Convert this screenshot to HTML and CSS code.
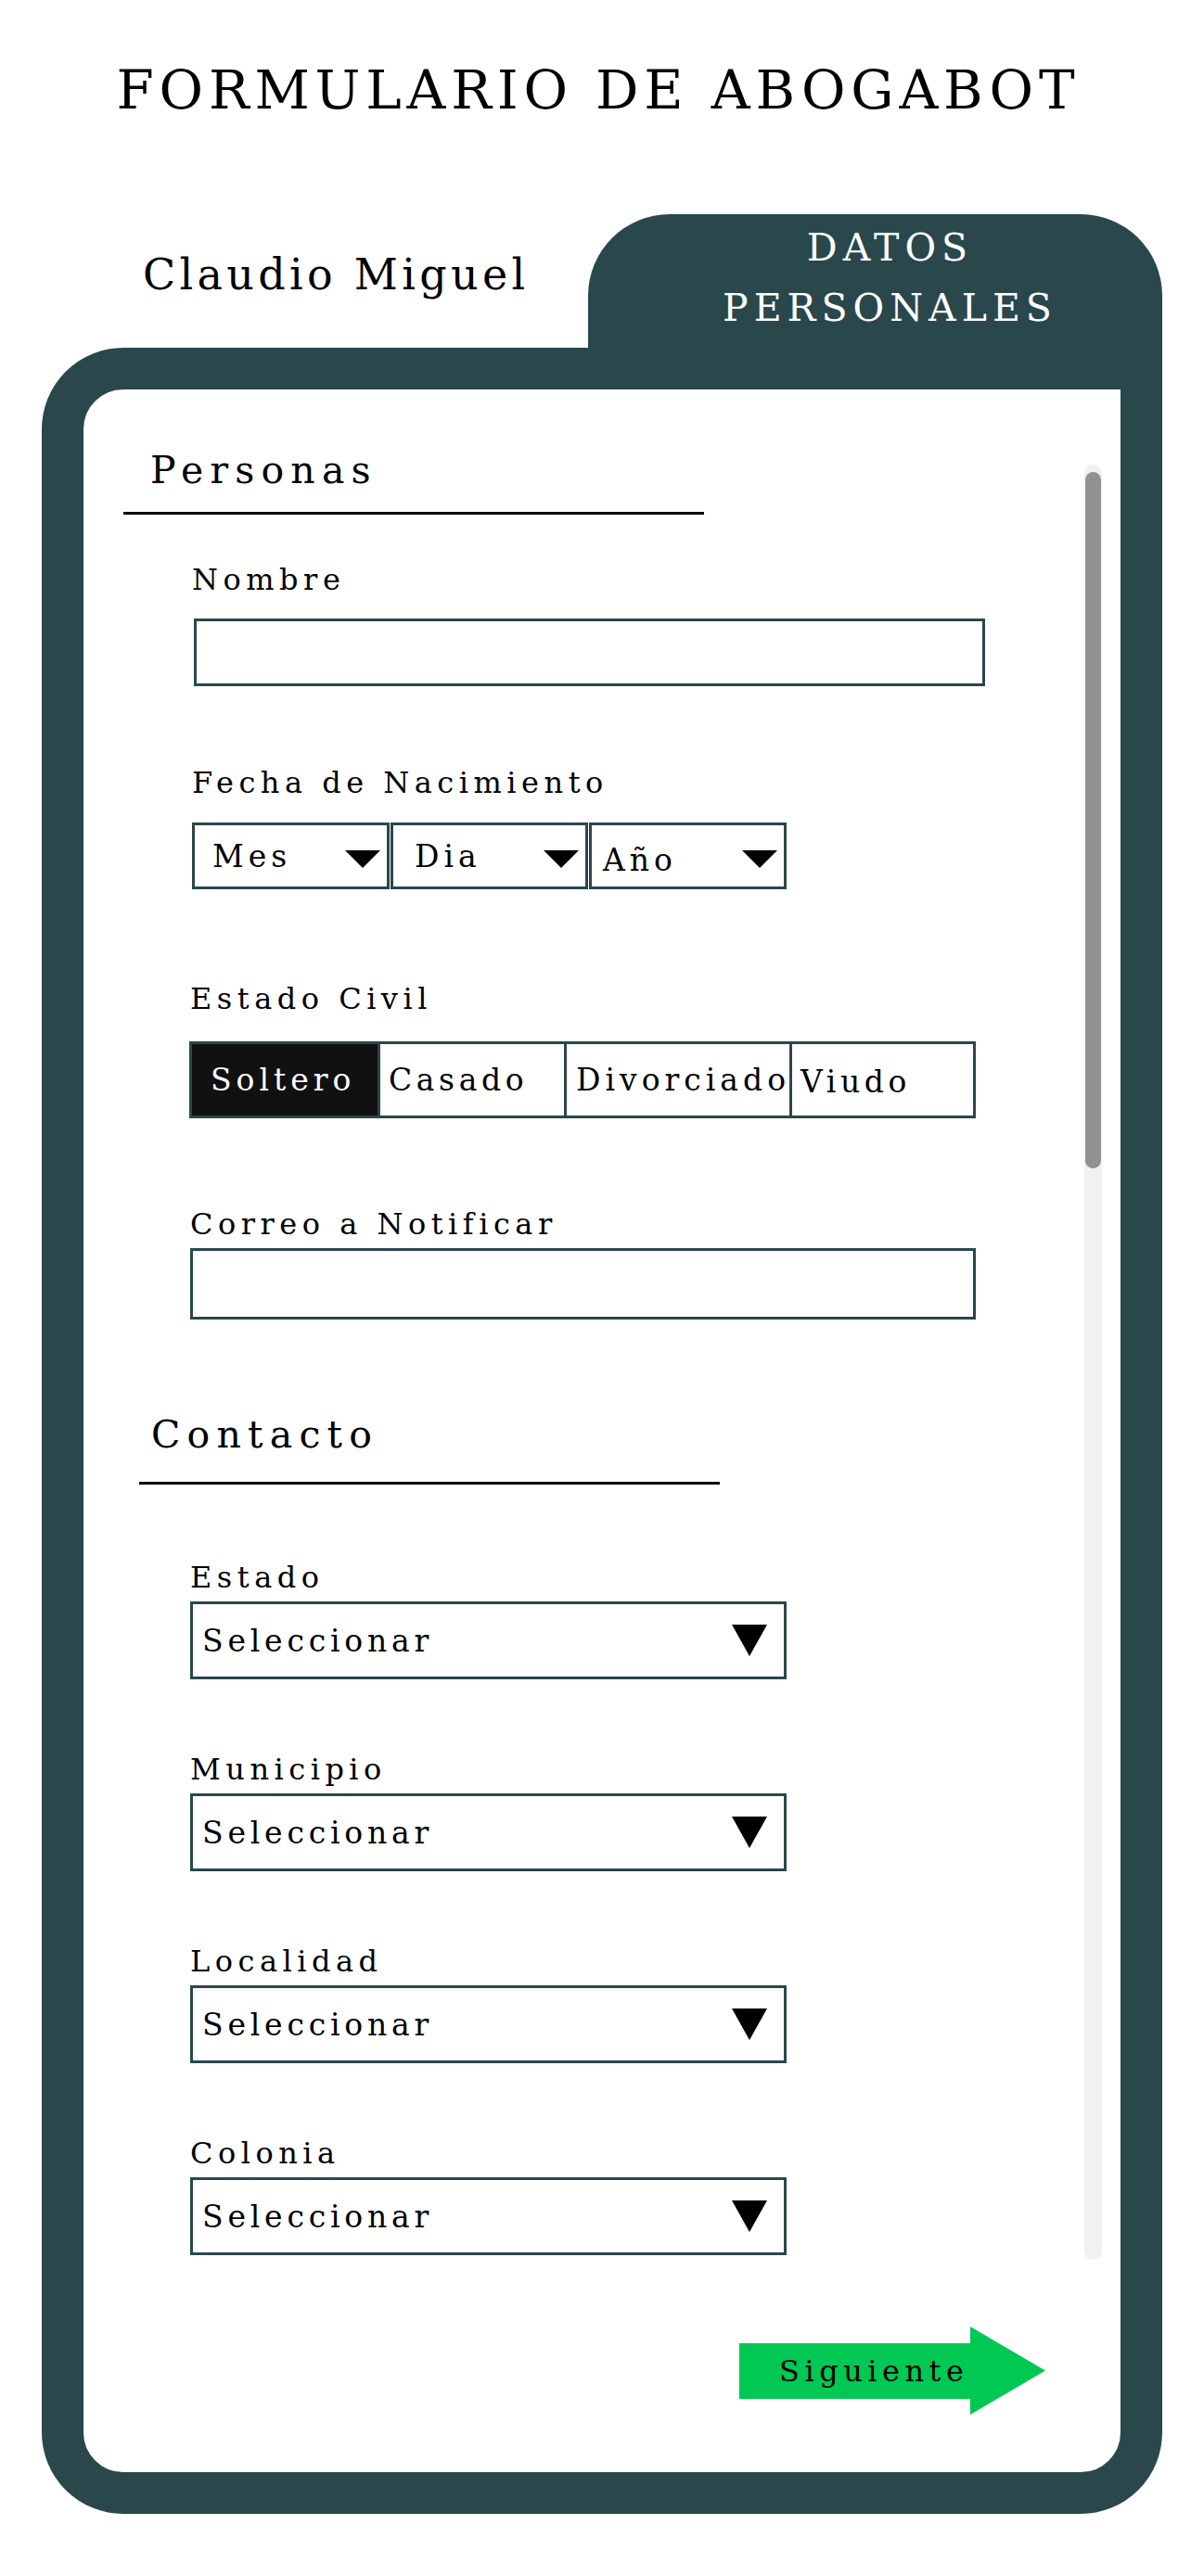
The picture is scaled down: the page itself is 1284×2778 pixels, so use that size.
FILE: index.html
```html
<!DOCTYPE html>
<html lang="es">
<head>
<meta charset="utf-8">
<title>Formulario de Abogabot</title>
<link rel="stylesheet" href="styles.css">
</head>
<body>
<h1 class="title">FORMULARIO DE ABOGABOT</h1>
<div class="sheet">
  <div class="sheet-head">
    <p class="user-name">Claudio Miguel</p>
    <div class="tab"><span>DATOS</span><span>PERSONALES</span></div>
  </div>
  <div class="frame">
    <div class="scroll-area">
      <div class="form">
        <h2 class="section-title section-title--personas">Personas</h2>

        <div class="field field--name">
          <label class="field-label">Nombre</label>
          <input class="text-input text-input--name" type="text">
        </div>

        <div class="field field--date">
          <label class="field-label">Fecha de Nacimiento</label>
          <div class="date-row">
            <div class="date-select date-select--month"><span>Mes</span><i class="tri-small"></i></div>
            <div class="date-select date-select--day"><span>Dia</span><i class="tri-small"></i></div>
            <div class="date-select date-select--year"><span class="year-text">Año</span><i class="tri-small"></i></div>
          </div>
        </div>

        <div class="field field--civil">
          <label class="field-label">Estado Civil</label>
          <div class="segmented">
            <div class="seg seg--active seg--soltero">Soltero</div>
            <div class="seg seg--casado">Casado</div>
            <div class="seg seg--divorciado">Divorciado</div>
            <div class="seg seg--viudo"><span class="viudo-text">Viudo</span></div>
          </div>
        </div>

        <div class="field field--email">
          <label class="field-label">Correo a Notificar</label>
          <input class="text-input text-input--email" type="email">
        </div>

        <h2 class="section-title section-title--contacto">Contacto</h2>

        <div class="field field--contact field--first">
          <label class="field-label">Estado</label>
          <div class="select-box"><span>Seleccionar</span><i class="tri-tall"></i></div>
        </div>
        <div class="field field--contact">
          <label class="field-label">Municipio</label>
          <div class="select-box"><span>Seleccionar</span><i class="tri-tall"></i></div>
        </div>
        <div class="field field--contact">
          <label class="field-label">Localidad</label>
          <div class="select-box"><span>Seleccionar</span><i class="tri-tall"></i></div>
        </div>
        <div class="field field--contact">
          <label class="field-label">Colonia</label>
          <div class="select-box"><span>Seleccionar</span><i class="tri-tall"></i></div>
        </div>
      </div>
      <div class="scrollbar"><div class="scrollbar-thumb"></div></div>
    </div>
    <div class="form-footer">
      <button class="next-btn" type="button">
        <span class="next-body">Siguiente</span>
        <svg class="next-head" width="81" height="95" viewBox="0 0 81 95"><polygon points="0,0 81,47.5 0,95" fill="#00c853"/></svg>
      </button>
    </div>
  </div>
</div>
</body>
</html>
```
FILE: styles.css
```css
* { box-sizing: border-box; }

html, body {
  margin: 0;
  padding: 0;
  background: #ffffff;
}

body {
  font-family: "DejaVu Serif", serif;
  color: #000;
}

.title {
  margin: 68px 0 0 0;
  font-size: 58px;
  line-height: 58px;
  font-weight: normal;
  letter-spacing: 5.8px;
  text-align: center;
  padding-left: 6px;
}

.sheet {
  margin: 105px 0 0 45px;
  width: 1208px;
}

.sheet-head {
  display: flex;
  justify-content: space-between;
  align-items: flex-start;
  height: 144px;
}

.user-name {
  margin: 42px 0 0 109px;
  font-size: 46px;
  line-height: 46px;
  letter-spacing: 4.3px;
}

.tab {
  width: 619px;
  height: 144px;
  background: #2a474c;
  border-radius: 88px 88px 0 0;
  color: #fff;
  display: flex;
  flex-direction: column;
  align-items: center;
  padding: 4px 0 0 32px;
  font-size: 41px;
  line-height: 65px;
  letter-spacing: 6px;
}

.frame {
  border: 45px solid #2a474c;
  border-radius: 88px 0 88px 88px;
  background: #fff;
  width: 1208px;
}

.scroll-area {
  display: flex;
  align-items: stretch;
}

.form {
  flex: 1;
  padding: 67px 0 5px 0;
}

.scrollbar {
  width: 19px;
  margin: 81px 20px 0 0;
  background: #f1f1f1;
  border-radius: 10px;
  padding: 8px 1px 0 1px;
}

.scrollbar-thumb {
  height: 751px;
  background: #919191;
  border-radius: 9px;
}

.section-title {
  margin: 0;
  width: 626px;
  font-size: 41px;
  line-height: 41px;
  font-weight: normal;
  letter-spacing: 7.2px;
  border-bottom: 3px solid #000;
}

.section-title--personas {
  margin-left: 43px;
  padding: 0 0 24px 29px;
}

.section-title--contacto {
  margin: 104px 0 0 60px;
  padding: 0 0 30px 13px;
}

.field {
  margin-left: 115px;
}

.field-label {
  display: block;
  font-size: 32px;
  line-height: 32px;
  letter-spacing: 5.5px;
}

.field--name {
  margin-top: 54px;
  margin-left: 117px;
}

.text-input {
  display: block;
  border: 3px solid #2a474c;
  border-radius: 0;
  background: #fff;
  outline: none;
  padding: 0 12px;
  font: inherit;
  -webkit-appearance: none;
  appearance: none;
}

.text-input--name {
  margin: 26px 0 0 2px;
  width: 853px;
  height: 73px;
}

.field--date {
  margin-top: 88px;
  margin-left: 117px;
}

.date-row {
  display: flex;
  gap: 1px;
  margin-top: 27px;
}

.date-select {
  width: 213px;
  height: 72px;
  border: 3px solid #2a474c;
  display: flex;
  align-items: center;
  justify-content: space-between;
  padding: 0 7px 0 19px;
  font-size: 33px;
  letter-spacing: 5px;
}

.date-select--day { padding-left: 23px; }
.date-select--year { padding-left: 12px; }
.year-text { padding-top: 8px; }

.tri-small {
  display: block;
  width: 0;
  height: 0;
  border-left: 19.5px solid transparent;
  border-right: 19.5px solid transparent;
  border-top: 19px solid #000;
  margin-top: 7px;
}

.field--civil {
  margin-top: 102px;
}

.segmented {
  display: flex;
  margin: 30px 0 0 -1px;
  height: 83px;
}

.seg {
  height: 83px;
  border: 3px solid #2a474c;
  margin-left: -3px;
  display: flex;
  align-items: center;
  padding-left: 9px;
  font-size: 33px;
  letter-spacing: 4.6px;
  background: #fff;
}

.seg:first-child { margin-left: 0; }
.seg--active { background: #111111; color: #fff; padding-left: 20px; letter-spacing: 5px; }
.seg--soltero { width: 206px; }
.seg--casado { width: 204px; }
.seg--divorciado { width: 246px; padding-left: 10px; letter-spacing: 5px; }
.seg--viudo { width: 201px; padding-left: 9px; }
.viudo-text { padding-top: 4px; }

.field--email {
  margin-top: 98px;
}

.text-input--email {
  margin-top: 10px;
  width: 847px;
  height: 77px;
}

.field--contact {
  margin-top: 81px;
}

.field--first {
  margin-top: 84px;
}

.select-box {
  margin-top: 10px;
  width: 643px;
  height: 84px;
  border: 3px solid #2a474c;
  display: flex;
  align-items: center;
  justify-content: space-between;
  padding: 0 18px 0 10px;
  font-size: 33px;
  letter-spacing: 4.8px;
}

.tri-tall {
  display: block;
  width: 0;
  height: 0;
  border-left: 19px solid transparent;
  border-right: 19px solid transparent;
  border-top: 34px solid #000;
}

.form-footer {
  display: flex;
  justify-content: flex-end;
  padding: 72px 81px 62px 0;
}

.next-btn {
  display: flex;
  align-items: center;
  border: 0;
  padding: 0;
  background: transparent;
  font: inherit;
  cursor: pointer;
}

.next-body {
  width: 249px;
  height: 60px;
  background: #00c853;
  color: #000;
  display: flex;
  align-items: center;
  padding-left: 43px;
  font-size: 32px;
  letter-spacing: 5.5px;
}

.next-head {
  display: block;
}
```
